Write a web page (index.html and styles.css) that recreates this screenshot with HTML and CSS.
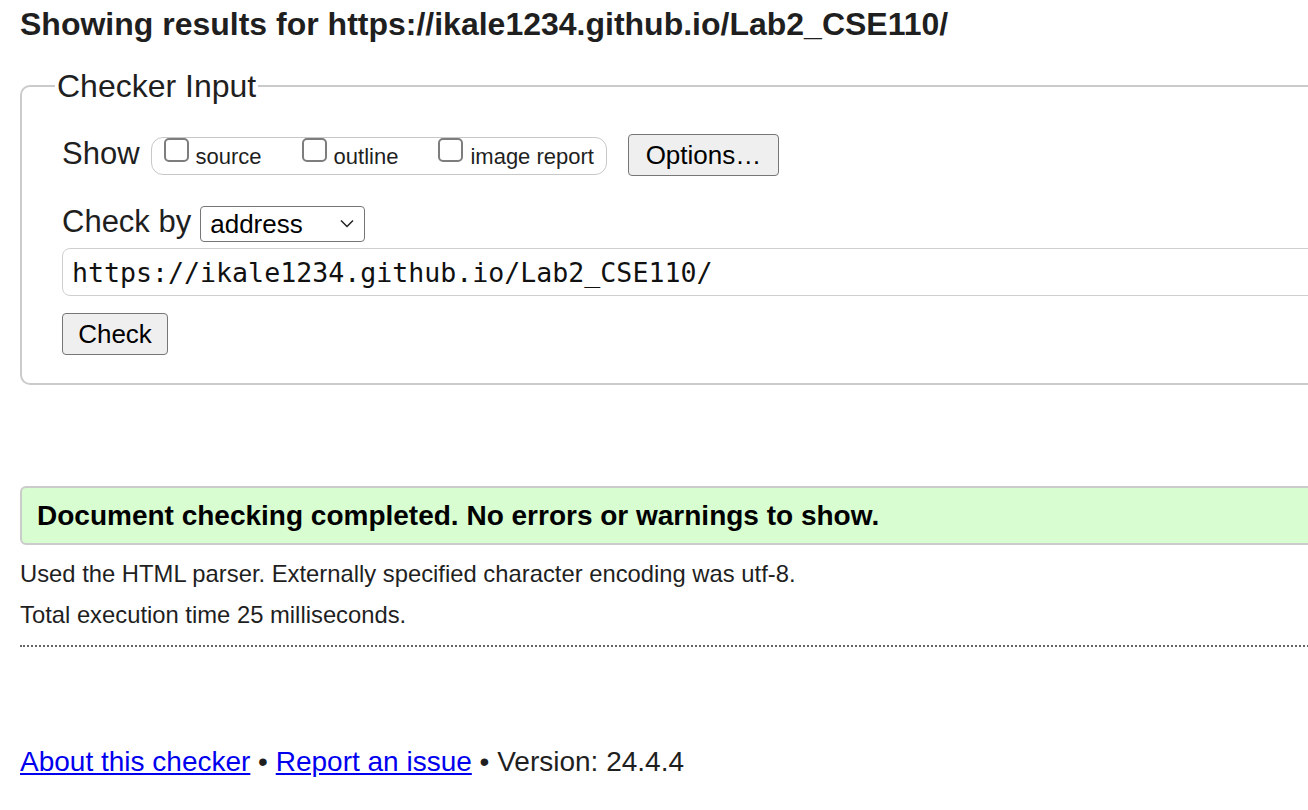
FILE: index.html
```html
<!DOCTYPE html>
<html lang="en">
<head>
<meta charset="utf-8">
<title>Nu Html Checker</title>
<link rel="stylesheet" href="styles.css">
</head>
<body>
<div class="page">
  <h1 class="title">Showing results for https://ikale1234.github.io/Lab2_CSE110/</h1>
  <form class="checker">
    <fieldset class="panel">
      <legend class="panel-legend">Checker Input</legend>
      <div class="panel-body">
        <div class="row show-row">
          <span class="label label-show">Show</span>
          <div class="opt-group">
            <label class="opt"><input type="checkbox" class="box"><span class="opt-text">source</span></label>
            <label class="opt"><input type="checkbox" class="box"><span class="opt-text">outline</span></label>
            <label class="opt"><input type="checkbox" class="box"><span class="opt-text">image report</span></label>
          </div>
          <button type="button" class="btn btn-options">Options…</button>
        </div>
        <div class="row by-row">
          <span class="label label-by">Check by</span>
          <span class="select-wrap">
            <select class="select"><option>address</option></select>
            <svg class="chev" width="14" height="9" viewBox="0 0 14 9"><polyline points="1,1.5 7,7.5 13,1.5" fill="none" stroke="#222" stroke-width="1.5"/></svg>
          </span>
        </div>
        <input type="text" class="url" value="https://ikale1234.github.io/Lab2_CSE110/">
        <button type="button" class="btn btn-check">Check</button>
      </div>
    </fieldset>
  </form>
  <p class="success">Document checking completed. No errors or warnings to show.</p>
  <p class="details">Used the HTML parser. Externally specified character encoding was utf-8.</p>
  <p class="details details-time">Total execution time 25 milliseconds.</p>
  <hr class="divider">
  <p class="footer"><a href="#">About this checker</a> • <a href="#">Report an issue</a> • Version: 24.4.4</p>
</div>
</body>
</html>
```
FILE: styles.css
```css
html, body {
  margin: 0;
  padding: 0;
  overflow: hidden;
  background: #fff;
}
body {
  font-family: "Liberation Sans", Arial, Helvetica, sans-serif;
  color: #1f1f1f;
}
.page {
  width: 1500px;
  padding-left: 20px;
}
.title {
  font-size: 32px;
  line-height: 40px;
  font-weight: bold;
  margin: 4px 0 24px;
}
.checker {
  margin: 0;
}
.panel {
  margin: 0;
  border: 2px solid #cbcbcb;
  border-radius: 10px;
  padding: 30px 0 28px 0;
  min-width: 0;
}
.panel-legend {
  font-size: 32px;
  line-height: 36px;
  padding: 0 2px;
  margin-left: 33px;
  color: #1f1f1f;
}
.panel-body {
  padding-left: 40px;
}
.row {
  display: flex;
  align-items: flex-start;
}
.label {
  font-size: 31px;
  line-height: 36px;
}
.label-show {
  margin-top: 2px;
}
.opt-group {
  margin: 3px 0 0 11px;
  height: 38px;
  box-sizing: border-box;
  border: 1.5px solid #c8c8c8;
  border-radius: 12px;
  padding: 0 12px 0 12px;
  display: flex;
  gap: 40px;
}
.opt {
  display: flex;
  align-items: flex-start;
}
.box {
  appearance: none;
  -webkit-appearance: none;
  margin: 0;
  width: 25px;
  height: 24px;
  box-sizing: border-box;
  border: 2px solid #7d7d7d;
  border-radius: 5px;
  background: #fff;
}
.opt-text {
  font-size: 22px;
  line-height: 22px;
  margin: 8px 0 0 7px;
}
.btn {
  font-family: "Liberation Sans", Arial, sans-serif;
  font-size: 26px;
  height: 42px;
  box-sizing: border-box;
  background: #efefef;
  border: 1px solid #767676;
  border-radius: 4px;
  color: #000;
  padding: 0 15px;
}
.btn-options {
  margin-left: 21px;
  width: 151px;
}
.by-row {
  margin-top: 30px;
}
.label-by {
  margin-top: -2px;
}
.select-wrap {
  position: relative;
  margin-left: 9px;
  display: block;
}
.select {
  appearance: none;
  -webkit-appearance: none;
  display: block;
  width: 165px;
  height: 36px;
  box-sizing: border-box;
  border: 1px solid #767676;
  border-radius: 4px;
  background: #fff;
  font-family: "Liberation Sans", Arial, sans-serif;
  font-size: 26px;
  line-height: 34px;
  padding: 0 0 0 9px;
  color: #000;
}
.chev {
  position: absolute;
  right: 11px;
  top: 13px;
}
.url {
  display: block;
  margin: 6px 0 0;
  width: 1450px;
  height: 48px;
  box-sizing: border-box;
  border: 1.5px solid #cfcfcf;
  border-radius: 8px;
  padding: 0 0 0 9px;
  font-family: "DejaVu Sans Mono", Menlo, monospace;
  font-size: 26.6px;
  color: #111;
  background: #fff;
}
.btn-check {
  display: block;
  margin-top: 17px;
  width: 106px;
}
.success {
  margin: 101px 0 0;
  border: 2px solid #cbcbcb;
  border-radius: 6px;
  background: #d7fdd1;
  font-size: 28px;
  line-height: 33px;
  font-weight: bold;
  color: #000;
  padding: 11px 14px 11px 15px;
}
.details {
  font-size: 23.8px;
  line-height: 28px;
  margin: 15px 0 0;
}
.details-time {
  margin-top: 13px;
}
.divider {
  border: 0;
  border-top: 2px dotted #666;
  margin: 16px 0 0;
  height: 0;
}
.footer {
  font-size: 28px;
  line-height: 32px;
  margin: 99px 0 0;
}
.footer a {
  color: #0000ee;
  text-decoration: underline;
}
```
